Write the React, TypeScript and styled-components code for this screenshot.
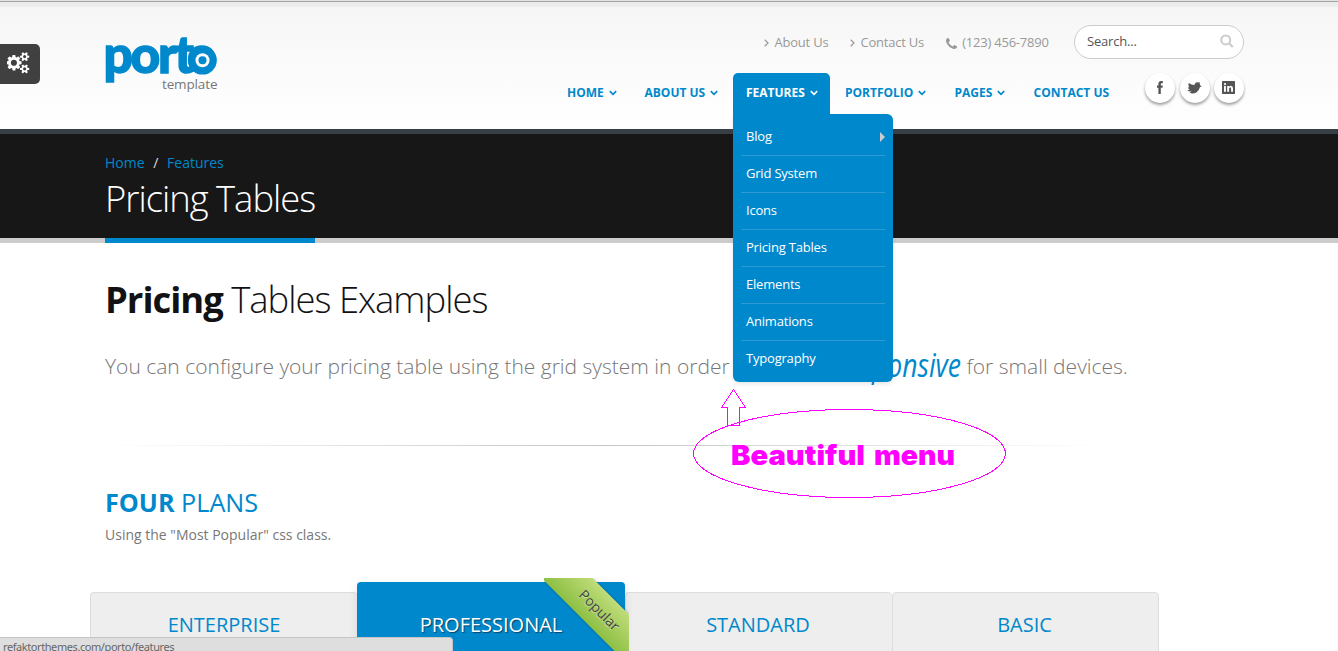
import React from "react";
import styled, { createGlobalStyle } from "styled-components";

const blue = "#0088cc";

const GlobalStyle = createGlobalStyle`
  * { box-sizing: border-box; }
  html, body { margin: 0; padding: 0; overflow: hidden; }
  body { background: #fff; color: #777; font-family: "Open Sans", Arial, sans-serif; font-size: 14px; line-height: 22px; }
  h1, h2, h4, p, ul { margin: 0; padding: 0; font-weight: 400; }
  a { color: inherit; text-decoration: none; }
`;

const Page = styled.div`
  position: relative;
  width: 1338px;
  height: 651px;
  overflow: hidden;
`;

const Header = styled.header`
  height: 129px;
  border-top: 1px solid #e2e4e2;
  background: linear-gradient(#a3a5a3 1px, #ececec 1px, #ececec 6px, #f6f6f6 6px, #fff 124px);
`;

const HeaderInner = styled.div`
  display: flex;
  justify-content: space-between;
  width: 1140px;
  height: 100%;
  margin-left: 105px;
`;

const Logo = styled.a`
  display: block;
  margin-top: 32px;
  width: 116px;
  height: 64px;
  svg { display: block; overflow: visible; }
`;

const HeaderRight = styled.div`
  display: flex;
  flex-direction: column;
  width: 691px;
  padding-top: 24px;
`;

const TopRow = styled.div`
  display: flex;
  height: 48px;
  padding-left: 210px;
`;

const TopLink = styled.a<{ $width: number }>`
  display: flex;
  align-items: center;
  width: ${(p) => p.$width}px;
  height: 34px;
  font-size: 13px;
  letter-spacing: -0.22px;
  color: #999;
  white-space: nowrap;
  svg { flex: none; margin-top: 2px; }
`;

const LinkLabel = styled.span<{ $gap: number }>`
  margin-left: ${(p) => p.$gap}px;
`;

const SearchBox = styled.div`
  display: flex;
  align-items: center;
  justify-content: space-between;
  width: 170px;
  height: 34px;
  padding: 0 9px 2px 12px;
  border: 1px solid #ccc;
  border-radius: 17px;
  background: #fff;
  color: #555;
  font-size: 13px;
  letter-spacing: -0.2px;
  svg { color: #ccc; }
`;

const NavRow = styled.div`
  display: flex;
  justify-content: space-between;
  padding-right: 1px;
`;

const Nav = styled.nav`
  display: flex;
`;

const NavItem = styled.div<{ $width: number; $active?: boolean }>`
  position: relative;
  width: ${(p) => p.$width}px;
  height: 41px;
  margin-right: 2px;
  padding-left: 13px;
  border-radius: 5px 5px 0 0;
  background: ${(p) => (p.$active ? blue : "transparent")};
  color: ${(p) => (p.$active ? "#fff" : blue)};
  font-size: 12px;
  font-weight: 700;
  line-height: 39px;
  white-space: nowrap;
  svg { margin: 0 0 1px 5px; }
`;

const Menu = styled.ul`
  position: absolute;
  z-index: 5;
  top: 41px;
  left: 0;
  width: 160px;
  height: 268px;
  padding: 5px 8px;
  border-radius: 0 6px 6px 6px;
  background: ${blue};
  box-shadow: 0 2px 4px rgba(0, 0, 0, 0.1);
  list-style: none;
`;

const MenuItem = styled.li`
  display: flex;
  align-items: center;
  justify-content: space-between;
  height: 37px;
  padding: 0 0 2px 5px;
  border-bottom: 1px solid #2e9bd6;
  color: #fff;
  font-size: 13px;
  font-weight: 400;
  letter-spacing: -0.2px;
  line-height: 20px;
  &:last-child { border-bottom: 0; padding-bottom: 3px; }
`;

const SubArrow = styled.span`
  margin-top: 1px;
  border: 5px solid transparent;
  border-left-color: #ccc;
  border-right: 0;
`;

const Socials = styled.div`
  display: flex;
  gap: 4.5px;
`;

const Social = styled.a`
  display: flex;
  align-items: center;
  justify-content: center;
  width: 30px;
  height: 30px;
  border-radius: 50%;
  background: #fff;
  color: #555;
  box-shadow: 0 2px 3px rgba(0, 0, 0, 0.38);
  svg { margin: 0 1px 1px 0; }
`;

const TitleBar = styled.section`
  height: 114px;
  padding-left: 105px;
  border-top: 5px solid #384045;
  border-bottom: 5px solid #ccc;
  background: #171717;
`;

const Crumbs = styled.div`
  display: flex;
  gap: 8.7px;
  padding-top: 18px;
  color: ${blue};
  span { color: #ddd; }
`;

const PageTitle = styled.h1`
  width: 210px;
  height: 69px;
  border-bottom: 5px solid ${blue};
  color: #fff;
  font-size: 36.4px;
  font-weight: 300;
  line-height: 48px;
  letter-spacing: -1px;
  white-space: nowrap;
`;

const Content = styled.main`
  width: 1069px;
  margin-left: 90px;
`;

const Section = styled.div`
  padding: 0 15px;
`;

const Heading = styled.h2`
  padding-top: 34px;
  color: #121214;
  font-size: 36.4px;
  font-weight: 300;
  line-height: 44px;
  letter-spacing: -1px;
  strong { font-weight: 700; }
`;

const Lead = styled.p`
  padding-top: 32px;
  color: #777;
  font-size: 21px;
  font-weight: 300;
  line-height: 27px;
  white-space: nowrap;
`;

const Handwritten = styled.span`
  display: inline-block;
  width: 127px;
  height: 27px;
  vertical-align: top;
  color: ${blue};
  svg { display: block; overflow: visible; }
`;

const Rule = styled.hr`
  width: 1000px;
  height: 1px;
  margin: 65px 0 0;
  border: 0;
  background: linear-gradient(to right, transparent, rgba(0, 0, 0, 0.23), transparent);
`;

const SubHeading = styled.h4`
  padding-top: 43px;
  color: ${blue};
  font-size: 25.2px;
  line-height: 27px;
  letter-spacing: 0;
  strong { font-weight: 700; }
`;

const Note = styled.p`
  padding-top: 8px;
`;

const Plans = styled.div`
  display: flex;
  align-items: flex-start;
  padding-top: 36px;
`;

const Plan = styled.div<{ $popular?: boolean; $shift?: number }>`
  position: relative;
  z-index: ${(p) => (p.$popular ? 1 : 0)};
  flex: none;
  width: ${(p) => (p.$popular ? 268 : 267)}px;
  height: 110px;
  margin-top: ${(p) => (p.$popular ? 0 : 10)}px;
  padding-top: ${(p) => (p.$popular ? 30 : 19)}px;
  padding-right: ${(p) => p.$shift ?? 0}px;
  border: ${(p) => (p.$popular ? "0" : "1px solid #ddd")};
  border-right-width: ${(p) => (p.$shift ? 1 : 0)}px;
  border-radius: 4px 4px 0 0;
  background: ${(p) => (p.$popular ? blue : "#eee")};
  box-shadow: ${(p) => (p.$popular ? "0 3px 10px rgba(0, 0, 0, 0.1)" : "none")};
  color: ${(p) => (p.$popular ? "#fff" : blue)};
  text-shadow: ${(p) => (p.$popular ? "1px 1px 1px rgba(0, 0, 0, 0.5)" : "none")};
  font-size: 20px;
  line-height: 26px;
  text-align: center;
`;

const PlanName = styled.span<{ $inset: number }>`
  display: block;
  padding-right: ${(p) => p.$inset}px;
`;

const RibbonClip = styled.div`
  position: absolute;
  top: -4px;
  right: -4px;
  width: 85px;
  height: 88px;
  overflow: hidden;
`;

const Ribbon = styled.div`
  position: absolute;
  top: 15px;
  left: -14px;
  width: 140px;
  height: 36px;
  padding-right: 2px;
  background: linear-gradient(#bfdc7a, #8ec044);
  box-shadow: 0 0 3px rgba(0, 0, 0, 0.3);
  color: #444;
  font-size: 14px;
  line-height: 35px;
  text-shadow: 0 1px 0 rgba(255, 255, 255, 0.5);
  transform: rotate(45deg);
`;

const SettingsTab = styled.div`
  position: absolute;
  top: 44px;
  left: 0;
  display: flex;
  align-items: center;
  width: 40px;
  height: 40px;
  padding: 0 0 2px 7px;
  border-radius: 0 5px 5px 0;
  background: #404040;
  color: #fff;
`;

const StatusBar = styled.div`
  position: absolute;
  z-index: 10;
  bottom: 0;
  left: 0;
  width: 453px;
  height: 14px;
  padding-left: 3px;
  overflow: hidden;
  border-top: 1px solid #c4c4c4;
  border-right: 1px solid #c4c4c4;
  border-top-right-radius: 4px;
  background: #dedede;
  color: #666;
  font-family: "Noto Sans", sans-serif;
  font-size: 11px;
  letter-spacing: -0.42px;
  line-height: 18px;
`;

const Annotation = styled.svg`
  position: absolute;
  z-index: 8;
  top: 385px;
  left: 690px;
`;

const AngleDown = () => (
  <svg width="8" height="6" viewBox="0 0 8 6" fill="none" stroke="currentColor" strokeWidth="1.6">
    <path d="M0.8 1.1 L4 4.3 L7.2 1.1" />
  </svg>
);

const AngleRight = () => (
  <svg width="5" height="8" viewBox="0 0 5 8" fill="none" stroke="currentColor" strokeWidth="1.2">
    <path d="M0.7 0.8 L4 4 L0.7 7.2" />
  </svg>
);

const PhoneIcon = () => (
  <svg width="11" height="11" viewBox="0 128 1408 1408" fill="currentColor">
    <path d="M1408 1240q0 27-10 70.5t-21 68.5q-21 50-122 106-94 51-186 51-27 0-53-3.5t-57.5-12.5-47-14.5-55.5-20.5-49-18q-98-35-175-83-127-79-264-216t-216-264q-48-77-83-175-3-9-18-49t-20.5-55.5-14.5-47-12.5-57.5-3.5-53q0-92 51-186 56-101 106-122 25-11 68.5-21t70.5-10q14 0 21 3 18 6 53 76 11 19 30 54t35 63.5 31 53.5q3 4 17.5 25t21.5 35.5 7 28.5q0 20-28.5 50t-62 55-62 53-28.5 46q0 9 5 22.5t8.5 20.5 14 24 11.5 19q76 137 174 235t235 174q2 1 19 11.5t24 14 20.5 8.5 22.5 5q18 0 46-28.5t53-62 55-62 50-28.5q14 0 28.5 7t35.5 21.5 25 17.5q25 15 53.5 31t63.5 35 54 30q70 35 76 53 3 7 3 21z" />
  </svg>
);

const SearchIcon = () => (
  <svg width="14" height="14" viewBox="0 0 14 14" fill="none" stroke="currentColor" strokeWidth="2">
    <circle cx="5.7" cy="5.9" r="4.5" />
    <path d="M9 9.2 L12.8 13" strokeWidth="2.3" />
  </svg>
);

const CogsIcon = () => (
  <svg width="23" height="21.5" viewBox="0 0 1920 1792" fill="currentColor">
    <path d="M832 896q0-106-75-181t-181-75-181 75-75 181 75 181 181 75 181-75 75-181zm768 512q0-52-38-90t-90-38-90 38-38 90q0 53 37.5 90.5t90.5 37.5 90.5-37.5 37.5-90.5zm0-1024q0-52-38-90t-90-38-90 38-38 90q0 53 37.5 90.5t90.5 37.5 90.5-37.5 37.5-90.5zm-384 421v185q0 10-7 19.5t-16 10.5l-155 24q-11 35-32 76 34 48 90 115 7 11 7 20 0 12-7 19-23 30-82.5 89.5t-78.5 59.5q-11 0-21-7l-115-90q-37 19-77 31-11 108-23 155-7 24-30 24h-186q-11 0-20-7.5t-10-17.5l-23-153q-34-10-75-31l-118 89q-7 7-20 7-11 0-21-8-144-133-144-160 0-9 7-19 10-14 41-53t47-61q-23-44-35-82l-152-24q-10-1-17-9.5t-7-19.5v-185q0-10 7-19.5t16-10.5l155-24q11-35 32-76-34-48-90-115-7-11-7-20 0-12 7-20 22-30 82-89t79-59q11 0 21 7l115 90q34-18 77-32 11-108 23-154 7-24 30-24h186q11 0 20 7.5t10 17.5l23 153q34 10 75 31l118-89q8-7 20-7 11 0 21 8 144 133 144 160 0 8-7 19-12 16-42 54t-45 60q23 48 34 82l152 23q10 2 17 10.5t7 19.5zm640 533v140q0 16-149 31-12 27-30 52 51 113 51 138 0 4-4 7-122 71-124 71-8 0-46-47t-52-68q-20 2-30 2t-30-2q-14 21-52 68t-46 47q-2 0-124-71-4-3-4-7 0-25 51-138-18-25-30-52-149-15-149-31v-140q0-16 149-31 13-29 30-52-51-113-51-138 0-4 4-7 4-2 35-20t59-34 30-16q8 0 46 46.5t52 67.5q20-2 30-2t30 2q51-71 92-112l6-2q4 0 124 70 4 3 4 7 0 25-51 138 17 23 30 52 149 15 149 31zm0-1024v140q0 16-149 31-12 27-30 52 51 113 51 138 0 4-4 7-122 71-124 71-8 0-46-47t-52-68q-20 2-30 2t-30-2q-14 21-52 68t-46 47q-2 0-124-71-4-3-4-7 0-25 51-138-18-25-30-52-149-15-149-31v-140q0-16 149-31 13-29 30-52-51-113-51-138 0-4 4-7 4-2 35-20t59-34 30-16q8 0 46 46.5t52 67.5q20-2 30-2t30 2q51-71 92-112l6-2q4 0 124 70 4 3 4 7 0 25-51 138 17 23 30 52 149 15 149 31z" />
  </svg>
);

const FacebookIcon = () => (
  <svg width="6" height="13" viewBox="0 0 6 13" fill="currentColor">
    <path d="M5.8 0.1 V2.3 H4.6 Q3.8 2.3 3.8 3.1 V4.5 H5.8 L5.5 6.7 H3.8 V13 H1.4 V6.7 H0 V4.5 H1.4 V2.9 Q1.4 0 4.2 0 Z" />
  </svg>
);

const TwitterIcon = () => (
  <svg width="15" height="12" viewBox="0 0 15 12" fill="currentColor">
    <path d="M1.8 0.9 Q4.4 3 7.4 3.1 Q7.9 0.9 9.6 0.3 Q10.6 0 11.5 0.5 L13 0.3 L12.6 1.6 Q13.1 2.3 13.1 3.2 L14.8 4.6 L13 5 Q12.2 8.7 9.3 10.4 Q5.6 12.4 2.4 10.4 L4.8 9.6 Q1.4 9.7 0.1 7.9 Q1.8 8.2 3 7.6 Q1 6.8 0.9 5.2 L2.4 5.4 Q0.9 3.4 1.8 0.9 Z" />
  </svg>
);

const LinkedinIcon = () => (
  <svg width="13" height="13" viewBox="0 0 13 13">
    <rect width="13" height="13" rx="0.6" fill="currentColor" />
    <g fill="#fff">
      <circle cx="3" cy="3.1" r="1.1" />
      <rect x="2" y="5" width="1.9" height="5.8" />
      <path d="M5.2 5 H7 V5.8 Q7.6 4.8 8.9 4.8 Q11 4.8 11 7.3 V10.8 H9.1 V7.7 Q9.1 6.4 8.2 6.4 Q7.1 6.4 7.1 7.7 V10.8 H5.2 Z" />
    </g>
  </svg>
);

const menuEntries = ["Blog", "Grid System", "Icons", "Pricing Tables", "Elements", "Animations", "Typography"];

const navEntries = [
  { label: "HOME", width: 75.5, arrow: true },
  { label: "ABOUT US", width: 99.5, arrow: true },
  { label: "FEATURES", width: 97, arrow: true, active: true },
  { label: "PORTFOLIO", width: 107.5, arrow: true },
  { label: "PAGES", width: 77, arrow: true },
  { label: "CONTACT US", width: 102 },
];

export default function App() {
  return (
    <Page>
      <GlobalStyle />
      <Header>
        <HeaderInner>
          <Logo>
            <svg width="116" height="64" viewBox="0 0 116 64">
              <text x="-1.5 25.5 53 69.5 82" y="40" fontFamily="Lato" fontWeight="900" fontSize="51.5" fill={blue} stroke={blue} strokeWidth="1.4">porto</text>
              <circle cx="97.5" cy="27.3" r="14.3" fill={blue} />
              <circle cx="97.5" cy="27.3" r="7" fill="#fafafa" />
              <circle cx="97.5" cy="27.3" r="4" fill={blue} />
              <text x="57" y="56" fontFamily="Open Sans" fontSize="13.5" fill="#777" textLength="55.5">template</text>
            </svg>
          </Logo>
          <HeaderRight>
            <TopRow>
              <TopLink $width={86}><AngleRight /><LinkLabel $gap={5.5}>About Us</LinkLabel></TopLink>
              <TopLink $width={96}><AngleRight /><LinkLabel $gap={5.5}>Contact Us</LinkLabel></TopLink>
              <TopLink $width={128}><PhoneIcon /><LinkLabel $gap={5.2}>(123) 456-7890</LinkLabel></TopLink>
              <SearchBox>Search...<SearchIcon /></SearchBox>
            </TopRow>
            <NavRow>
              <Nav>
                {navEntries.map((n) => (
                  <NavItem key={n.label} $width={n.width} $active={n.active}>
                    {n.label}
                    {n.arrow && <AngleDown />}
                    {n.active && (
                      <Menu>
                        {menuEntries.map((m) => (
                          <MenuItem key={m}>
                            {m}
                            {m === "Blog" && <SubArrow />}
                          </MenuItem>
                        ))}
                      </Menu>
                    )}
                  </NavItem>
                ))}
              </Nav>
              <Socials>
                <Social><FacebookIcon /></Social>
                <Social><TwitterIcon /></Social>
                <Social><LinkedinIcon /></Social>
              </Socials>
            </NavRow>
          </HeaderRight>
        </HeaderInner>
      </Header>
      <TitleBar>
        <Crumbs><a>Home</a><span>/</span><a>Features</a></Crumbs>
        <PageTitle>Pricing Tables</PageTitle>
      </TitleBar>
      <Content>
        <Section>
          <Heading><strong>Pricing</strong> Tables Examples</Heading>
          <Lead>
            You can configure your pricing table using the grid system in order to make it{" "}
            <Handwritten>
              <svg width="127" height="27">
                <text x="3" y="24" fontFamily="Open Sans" fontStyle="italic" fontSize="33" fontWeight="400" fill={blue} textLength="124" lengthAdjust="spacingAndGlyphs">responsive</text>
              </svg>
            </Handwritten>{" "}
            for small devices.
          </Lead>
          <Rule />
          <SubHeading><strong>FOUR</strong> PLANS</SubHeading>
          <Note>Using the "Most Popular" css class.</Note>
        </Section>
        <Plans>
          <Plan><PlanName $inset={0}>ENTERPRISE</PlanName></Plan>
          <Plan $popular>
            PROFESSIONAL
            <RibbonClip><Ribbon>Popular</Ribbon></RibbonClip>
          </Plan>
          <Plan><PlanName $inset={2}>STANDARD</PlanName></Plan>
          <Plan $shift={1}><PlanName $inset={1}>BASIC</PlanName></Plan>
        </Plans>
      </Content>
      <SettingsTab><CogsIcon /></SettingsTab>
      <Annotation width="320" height="116" viewBox="0 0 320 116">
        <g fill="none" stroke="#ff00ff" strokeWidth="1" shapeRendering="crispEdges">
          <ellipse cx="159.5" cy="68.5" rx="156" ry="44" />
          <path d="M43.5 4.5 L55.5 22.5 H49.5 V40.5 H37.5 V22.5 H31.5 Z" />
        </g>
        <g fontFamily="Inter" fontWeight="900" fontSize="27" fill="#ff00ff">
          <text x="41" y="80" textLength="134" lengthAdjust="spacingAndGlyphs">Beautiful</text>
          <text x="184" y="80" textLength="81" lengthAdjust="spacingAndGlyphs">menu</text>
        </g>
      </Annotation>
      <StatusBar>refaktorthemes.com/porto/features</StatusBar>
    </Page>
  );
}
